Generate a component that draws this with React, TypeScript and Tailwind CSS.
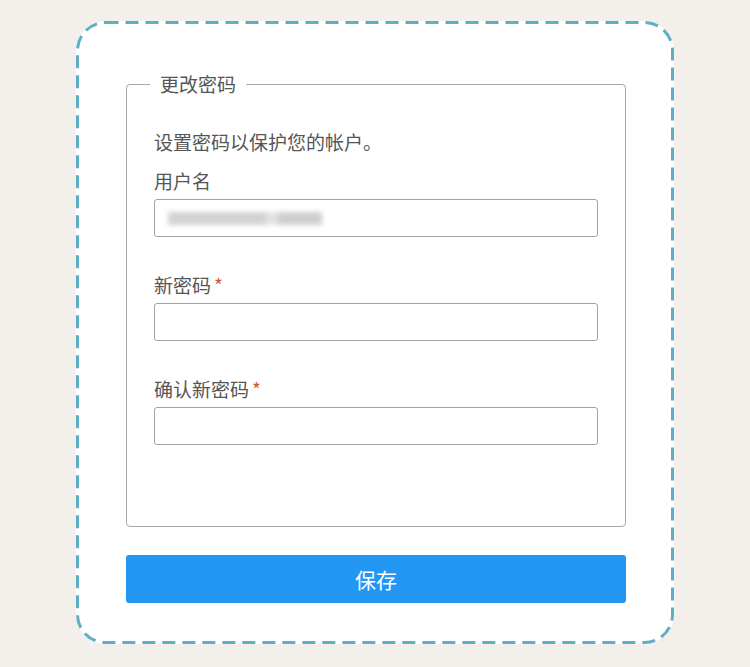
import React from 'react';

const font = { fontFamily: '"Noto Sans CJK SC", "Noto Sans", sans-serif' };

const Field: React.FC<{ label: string; required?: boolean; className?: string; children?: React.ReactNode }> = ({ label, required, className, children }) => {
  return (
    <div className={`flex flex-col ${className ?? ''}`}>
      <label className="text-[19px] leading-[24px] text-[#555]">
        {label}
        {required && <span className="text-[#cf5a3c] ml-[3px]">*</span>}
      </label>
      <div className="mt-[6px] h-[38px] w-full rounded-[3px] border border-[#a3a3a3] bg-white flex items-center px-[13px]">
        {children}
      </div>
    </div>
  );
};

export default function App() {
  return (
    <div className="min-h-[667px] w-full bg-[#f3efea] pt-[21px]" style={font}>
      <div className="relative ml-[76px] w-[598px] h-[623px] rounded-[30px] bg-white pt-[51px] pl-[50px] pr-[48px]">
        {/* dashed outline */}
        <svg className="absolute inset-0 pointer-events-none" width="598" height="623">
          <rect
            x="1.5"
            y="1.5"
            width="595"
            height="620"
            rx="28"
            fill="none"
            stroke="#5bb0c5"
            strokeWidth="3"
            strokeDasharray="13 7"
          />
        </svg>
        <fieldset className="h-[455px] rounded-[4px] border border-[#a8a8a8] pl-[27px] pr-[27px] pt-[22px]">
          <legend className="ml-[-4px] px-[10px] text-[19px] leading-[24px] text-[#555]">更改密码</legend>
          <p className="text-[19px] leading-[24px] text-[#555] mt-[12px]">设置密码以保护您的帐户。</p>
          <Field label="用户名" className="mt-[15px]">
            <div className="flex items-center blur-[2.5px]">
              <div className="h-[13px] w-[98px] bg-[#d2d2d2]" />
              <div className="h-[13px] w-[12px] bg-[#e2e2e2]" />
              <div className="h-[13px] w-[44px] bg-[#cecece]" />
            </div>
          </Field>
          <Field label="新密码" required className="mt-[36px]" />
          <Field label="确认新密码" required className="mt-[36px]" />
        </fieldset>
        <button className="mt-[28px] h-[48px] w-full rounded-[3px] bg-[#2196f3] text-white text-[21px] leading-[48px]">
          保存
        </button>
      </div>
    </div>
  );
}
